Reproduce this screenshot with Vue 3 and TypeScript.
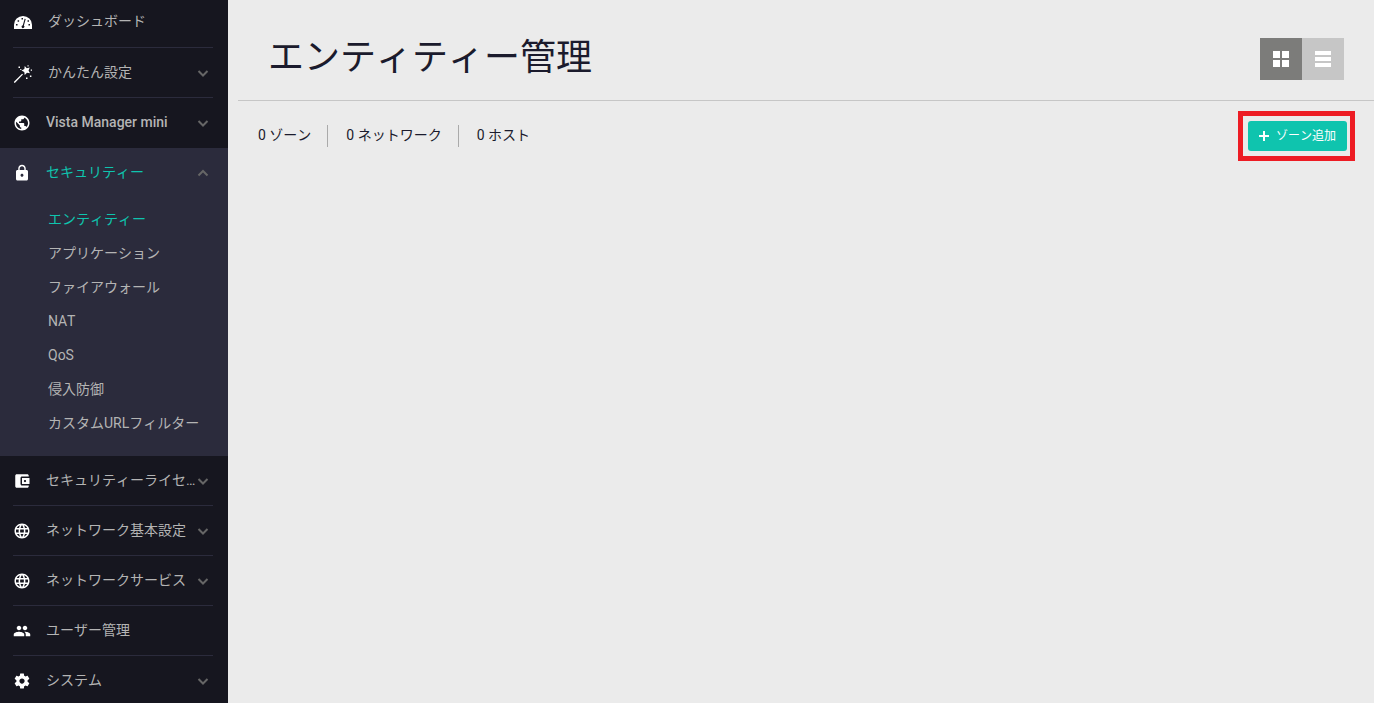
<script setup lang="ts">
import { ref } from 'vue'

interface MenuItem {
  label: string
  icon: string
  expandable: boolean
  short?: boolean
  indent?: boolean
  children?: string[]
}

const icons: Record<string, string> = {
  gauge:
    'M0 21.300V15.500A12 11.500 0 0 1 24 15.500V21.300ZM2.700 14.500h2v2h-2ZM4.800 9.500h2v2h-2ZM10 6.500h2v2h-2ZM19.300 14.500h2v2h-2ZM18 9.500h2v2h-2ZM14.200 7.500l1.400.400-2.400 8.800a1.900 1.900 0 1 1-1.500-.400Z',
  wand:
    'M0 23.700L10.800 12.900 12 14.100 1.400 25H0ZM14.300 2.800L17 5.500 21 4.700 19.400 8.500 21.300 12.200 17.300 11.800 14.300 14.800 13.700 10.500 10 8.500 13.800 6.700ZM6 3.200h2v2H6ZM18 1.700h1.500v1.500H18ZM22.300 7.200H24v1.700h-1.700ZM21.200 15.200h2v2h-2ZM16 18h2v2h-2ZM8.300 6.500h1.500V8H8.300Z',
  public:
    'M12 2C6.480 2 2 6.480 2 12s4.480 10 10 10 10-4.480 10-10S17.520 2 12 2zm-1 17.930c-3.950-.490-7-3.850-7-7.930 0-.620.080-1.210.210-1.790L9 15v1c0 1.100.900 2 2 2v1.930zm6.900-2.540c-.260-.810-1-1.390-1.900-1.390h-1v-3c0-.550-.450-1-1-1H8v-2h2c.550 0 1-.450 1-1V7h2c1.100 0 2-.900 2-2v-.410c2.930 1.190 5 4.060 5 7.410 0 2.080-.800 3.970-2.100 5.390z',
  lock:
    'M18 8h-1V6c0-2.760-2.240-5-5-5S7 3.240 7 6v2H6c-1.100 0-2 .900-2 2v10c0 1.100.900 2 2 2h12c1.100 0 2-.900 2-2V10c0-1.100-.900-2-2-2zm-6 9c-1.100 0-2-.900-2-2s.900-2 2-2 2 .900 2 2-.900 2-2 2zm3.100-9H8.900V6c0-1.710 1.390-3.100 3.100-3.100 1.710 0 3.100 1.390 3.100 3.100v2z',
  wallet:
    'M21 18v1c0 1.100-.900 2-2 2H5c-1.110 0-2-.900-2-2V5c0-1.100.890-2 2-2h14c1.100 0 2 .900 2 2v1h-9c-1.110 0-2 .900-2 2v8c0 1.100.890 2 2 2h9zm-9-2h10V8H12v8zm4-2.500c-.830 0-1.500-.670-1.500-1.500s.670-1.500 1.500-1.500 1.500.670 1.500 1.500-.670 1.500-1.500 1.500z',
  language:
    'M11.990 2C6.470 2 2 6.480 2 12s4.470 10 9.990 10C17.520 22 22 17.520 22 12S17.520 2 11.990 2zm6.930 6h-2.950c-.320-1.250-.780-2.450-1.380-3.560 1.840.630 3.370 1.910 4.330 3.560zM12 4.040c.830 1.200 1.480 2.530 1.910 3.960h-3.820c.430-1.430 1.080-2.760 1.910-3.960zM4.260 14C4.100 13.360 4 12.690 4 12s.100-1.360.260-2h3.380c-.080.660-.140 1.320-.140 2s.060 1.340.140 2H4.260zm.820 2h2.950c.320 1.250.780 2.450 1.380 3.560-1.840-.630-3.370-1.900-4.330-3.560zm2.950-8H5.080c.960-1.660 2.490-2.930 4.330-3.560C8.810 5.550 8.350 6.750 8.030 8zM12 19.960c-.830-1.200-1.480-2.530-1.910-3.960h3.820c-.430 1.430-1.080 2.760-1.910 3.960zM14.340 14H9.660c-.090-.660-.160-1.320-.160-2s.070-1.350.160-2h4.680c.090.650.160 1.320.160 2s-.070 1.340-.160 2zm.250 5.560c.600-1.110 1.060-2.310 1.380-3.560h2.950c-.960 1.650-2.490 2.930-4.330 3.560zM16.360 14c.080-.660.140-1.320.140-2s-.060-1.340-.140-2h3.380c.160.640.260 1.310.260 2s-.100 1.360-.260 2h-3.380z',
  people:
    'M16 11c1.660 0 2.990-1.340 2.990-3S17.660 5 16 5c-1.660 0-3 1.340-3 3s1.340 3 3 3zm-8 0c1.660 0 2.990-1.340 2.990-3S9.660 5 8 5C6.340 5 5 6.340 5 8s1.340 3 3 3zm0 2c-2.330 0-7 1.170-7 3.500V19h14v-2.500c0-2.330-4.670-3.500-7-3.500zm8 0c-.290 0-.620.020-.970.050 1.160.840 1.970 1.970 1.970 3.450V19h6v-2.500c0-2.330-4.670-3.500-7-3.500z',
  settings:
    'M19.430 12.980c.040-.320.070-.640.070-.980s-.030-.660-.070-.980l2.110-1.650c.190-.150.240-.420.120-.640l-2-3.460c-.120-.220-.390-.300-.610-.220l-2.490 1c-.520-.400-1.080-.730-1.690-.980l-.380-2.650C14.460 2.180 14.250 2 14 2h-4c-.250 0-.460.180-.490.420l-.380 2.650c-.610.250-1.170.590-1.690.980l-2.490-1c-.230-.090-.490 0-.610.220l-2 3.460c-.130.220-.070.490.120.640l2.110 1.650c-.040.320-.070.650-.070.980s.030.660.070.980l-2.110 1.650c-.190.150-.240.420-.120.640l2 3.460c.120.220.390.300.610.220l2.490-1c.520.400 1.080.730 1.690.980l.380 2.650c.030.240.240.420.490.420h4c.250 0 .460-.180.490-.420l.380-2.650c.610-.250 1.170-.590 1.690-.980l2.490 1c.230.090.490 0 .610-.220l2-3.460c.120-.220.070-.490-.120-.640l-2.110-1.650zM12 15.500c-1.930 0-3.500-1.570-3.500-3.500s1.570-3.500 3.500-3.500 3.500 1.570 3.500 3.500-1.570 3.500-3.500 3.500z',
}

const items: MenuItem[] = [
  { label: 'ダッシュボード', icon: 'gauge', expandable: false, short: true, indent: true },
  { label: 'かんたん設定', icon: 'wand', expandable: true, indent: true },
  { label: 'Vista Manager mini', icon: 'public', expandable: true },
  {
    label: 'セキュリティー',
    icon: 'lock',
    expandable: true,
    children: [
      'エンティティー',
      'アプリケーション',
      'ファイアウォール',
      'NAT',
      'QoS',
      '侵入防御',
      'カスタムURLフィルター',
    ],
  },
  { label: 'セキュリティーライセンス', icon: 'wallet', expandable: true },
  { label: 'ネットワーク基本設定', icon: 'language', expandable: true },
  { label: 'ネットワークサービス', icon: 'language', expandable: true },
  { label: 'ユーザー管理', icon: 'people', expandable: false },
  { label: 'システム', icon: 'settings', expandable: true },
]

const currentPage = 'エンティティー'
const view = ref<'grid' | 'list'>('grid')
const counts = ['0 ゾーン', '0 ネットワーク', '0 ホスト']

const isLatin = (text: string) => /^[\x20-\x7e]+$/.test(text)
</script>

<template>
  <div class="layout">
    <nav class="sidebar">
      <ul class="menu">
        <li
          v-for="item in items"
          :key="item.label"
          class="group"
          :class="{ open: item.children }"
        >
          <button type="button" class="item" :class="{ short: item.short, indent: item.indent }">
            <svg class="icon" viewBox="0 0 24 24" aria-hidden="true">
              <path :d="icons[item.icon]" fill-rule="evenodd" />
            </svg>
            <span class="label" :class="{ latin: isLatin(item.label) }">{{ item.label }}</span>
            <svg v-if="item.expandable" class="chevron" viewBox="0 0 12 12" aria-hidden="true">
              <path :d="item.children ? 'M1.500 8.500L6 4l4.500 4.500' : 'M1.500 4L6 8.500 10.500 4'" />
            </svg>
          </button>
          <ul v-if="item.children" class="submenu">
            <li v-for="child in item.children" :key="child">
              <a href="#" class="sublink" :class="{ current: child === currentPage }">{{ child }}</a>
            </li>
          </ul>
        </li>
      </ul>
    </nav>

    <main class="content">
      <header class="header">
        <h1 class="title">エンティティー管理</h1>
        <div class="views">
          <button
            type="button"
            class="view"
            :class="{ active: view === 'grid' }"
            aria-label="グリッド表示"
            @click="view = 'grid'"
          >
            <svg viewBox="0 0 16 16"><path d="M0 0h7v7H0ZM9 0h7v7H9ZM0 9h7v7H0ZM9 9h7v7H9Z" /></svg>
          </button>
          <button
            type="button"
            class="view"
            :class="{ active: view === 'list' }"
            aria-label="リスト表示"
            @click="view = 'list'"
          >
            <svg viewBox="0 0 16 16"><path d="M0 0h16v4H0ZM0 6h16v4H0ZM0 12h16v4H0Z" /></svg>
          </button>
        </div>
      </header>

      <div class="toolbar">
        <ul class="counts">
          <li v-for="count in counts" :key="count" class="count">{{ count }}</li>
        </ul>
        <div class="highlight">
          <button type="button" class="add">
            <svg viewBox="0 0 12 12" aria-hidden="true"><path d="M5 1h2v4h4v2H7v4H5V7H1V5h4Z" /></svg>
            <span>ゾーン追加</span>
          </button>
        </div>
      </div>
    </main>
  </div>
</template>

<style>
body {
  margin: 0;
  background: #ebebeb;
}
</style>

<style scoped>
.layout {
  display: flex;
  height: 100vh;
  font-family: Roboto, 'Noto Sans CJK JP', sans-serif;
  font-size: 14px;
  font-kerning: none;
  background: #ebebeb;
}

button {
  margin: 0;
  border: 0;
  font: inherit;
  font-kerning: inherit;
  cursor: pointer;
}

ul {
  margin: 0;
  padding: 0;
  list-style: none;
}

.sidebar {
  flex: 0 0 228px;
  overflow-y: auto;
  scrollbar-width: none;
  background: #16161f;
}

.group {
  padding: 0 15px 0 13px;
}

.item {
  display: flex;
  align-items: center;
  box-sizing: border-box;
  width: 100%;
  height: 50px;
  padding: 0 4px 0 0;
  border-bottom: 1px solid #2b2b3c;
  background: none;
  color: #b4b4b4;
  text-align: left;
}

.item.short {
  height: 48px;
  padding-bottom: 3px;
}

.group:has(+ .open) .item {
  border-bottom-color: transparent;
}

.icon {
  flex: none;
  width: 18px;
  height: 18px;
  overflow: visible;
  fill: #fff;
}

.label {
  flex: 1;
  min-width: 0;
  margin-left: 15px;
  padding-bottom: 2px;
  overflow: hidden;
  line-height: 20px;
  white-space: nowrap;
  text-overflow: ellipsis;
}

.label.latin {
  font-weight: 500;
  font-kerning: normal;
}

.indent .icon {
  margin-left: 1px;
}

.indent .label {
  margin-left: 16px;
}

.chevron {
  flex: none;
  width: 12px;
  height: 12px;
  fill: none;
  stroke: #666;
  stroke-width: 2;
}

.open {
  padding-bottom: 16px;
  background: #2b2b3c;
}

.open .item {
  color: #0fc4ae;
}

.submenu {
  padding: 4px 0 0 35px;
}

.sublink {
  display: block;
  color: #b4b4b4;
  line-height: 34px;
  white-space: nowrap;
  text-decoration: none;
}

.sublink.current {
  color: #0fc4ae;
}

.content {
  flex: 1;
  min-width: 0;
  padding-left: 10px;
}

.header {
  display: flex;
  align-items: center;
  justify-content: space-between;
  padding: 18px 30px 0;
  border-bottom: 1px solid #c6c6c6;
}

.title {
  margin: 0;
  padding-bottom: 2px;
  color: #1b1b2d;
  font-size: 36px;
  font-weight: 400;
  line-height: 80px;
}

.views {
  display: flex;
}

.view {
  display: flex;
  align-items: center;
  justify-content: center;
  width: 42px;
  height: 42px;
  padding: 0;
  background: #c6c6c6;
}

.view.active {
  background: #7c7c7a;
}

.view svg {
  width: 16px;
  height: 16px;
  fill: #fff;
}

.toolbar {
  display: flex;
  align-items: flex-start;
  justify-content: space-between;
  padding: 10px 19px 0 20px;
}

.counts {
  display: flex;
  padding-top: 14px;
}

.count {
  color: #1b1b2d;
  line-height: 20px;
  padding-bottom: 2px;
}

.count + .count {
  margin-left: 16px;
  padding-left: 18px;
  border-left: 1px solid #aaa;
}

.highlight {
  padding: 5px 3px 5px 5px;
  border: 5px solid #ed1c24;
}

.add {
  display: flex;
  align-items: center;
  gap: 6px;
  height: 30px;
  padding: 0 11px 0 10px;
  border-radius: 3px;
  background: #0fc4ae;
  color: #fff;
  font-size: 12px;
}

.add span {
  line-height: 18px;
}

.add svg {
  width: 12px;
  height: 12px;
  fill: #fff;
}
</style>
